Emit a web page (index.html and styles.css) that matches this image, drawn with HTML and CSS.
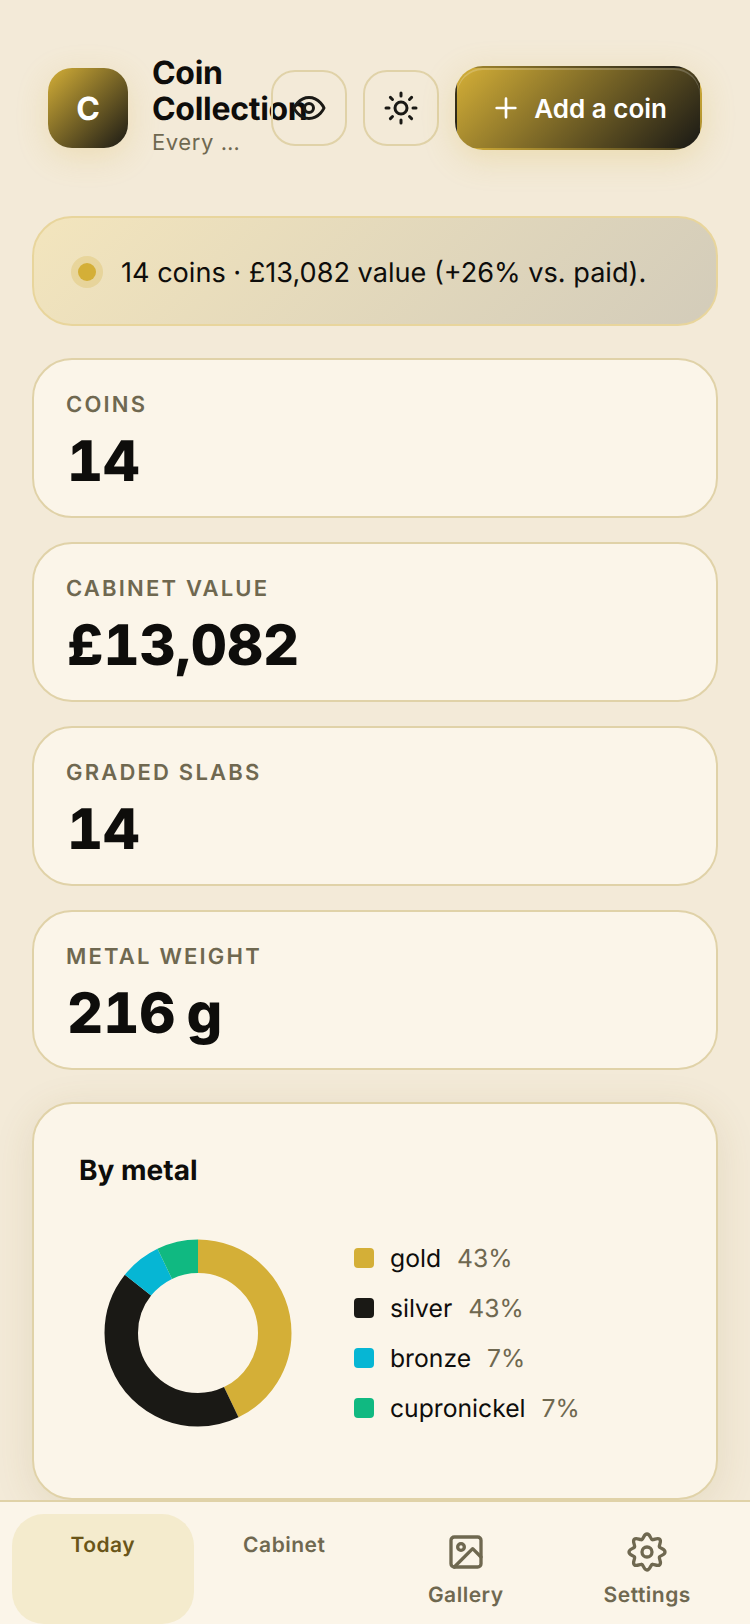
FILE: index.html
```html
<!DOCTYPE html>
<html lang="en">
<head>
<meta charset="utf-8">
<title>Coin Collection</title>
<link rel="stylesheet" href="styles.css">
</head>
<body>
<div class="app">
  <main class="content">
    <header class="topbar">
      <div class="logo">C</div>
      <div class="brand">
        <h1 class="brand-name">Coin Collection</h1>
        <p class="brand-tag">Every coin in the cabinet</p>
      </div>
      <div class="actions">
        <button class="icon-btn" aria-label="Toggle privacy">
          <svg class="icon" viewBox="0 0 24 24"><path d="M2 12s3-7 10-7 10 7 10 7-3 7-10 7-10-7-10-7z"/><circle cx="12" cy="12" r="3"/></svg>
        </button>
        <button class="icon-btn" aria-label="Toggle theme">
          <svg class="icon" viewBox="0 0 24 24"><circle cx="12" cy="12" r="4"/><path d="M12 2v2M12 20v2M4.930 4.930l1.410 1.410M17.660 17.660l1.410 1.410M2 12h2M20 12h2M6.340 17.660l-1.410 1.410M19.070 4.930l-1.410 1.410"/></svg>
        </button>
        <button class="add-btn">
          <svg class="icon add-icon" viewBox="0 0 24 24"><path d="M5 12h14M12 5v14"/></svg>
          <span>Add a coin</span>
        </button>
      </div>
    </header>

    <section class="banner">
      <span class="banner-dot"></span>
      <p class="banner-text">14 coins · £13,082 value (+26% vs. paid).</p>
    </section>

    <section class="stats">
      <article class="stat"><div class="stat-label">Coins</div><div class="stat-value">14</div></article>
      <article class="stat"><div class="stat-label">Cabinet value</div><div class="stat-value">£13,082</div></article>
      <article class="stat"><div class="stat-label">Graded slabs</div><div class="stat-value">14</div></article>
      <article class="stat"><div class="stat-label">Metal weight</div><div class="stat-value">216 g</div></article>
    </section>

    <section class="chart-card">
      <h2 class="chart-title">By metal</h2>
      <div class="chart-row">
        <svg class="donut" viewBox="0 0 240 240">
          <circle class="seg seg-gold" cx="120" cy="120" r="76.750" pathLength="14" stroke-dasharray="6 8" stroke-dashoffset="0"/>
          <circle class="seg seg-silver" cx="120" cy="120" r="76.750" pathLength="14" stroke-dasharray="6 8" stroke-dashoffset="-6"/>
          <circle class="seg seg-bronze" cx="120" cy="120" r="76.750" pathLength="14" stroke-dasharray="1 13" stroke-dashoffset="-12"/>
          <circle class="seg seg-cupro" cx="120" cy="120" r="76.750" pathLength="14" stroke-dasharray="1 13" stroke-dashoffset="-13"/>
        </svg>
        <ul class="legend">
          <li class="legend-row"><span class="swatch swatch-gold"></span><span class="legend-name">gold</span><span class="legend-pct">43%</span></li>
          <li class="legend-row"><span class="swatch swatch-silver"></span><span class="legend-name">silver</span><span class="legend-pct">43%</span></li>
          <li class="legend-row"><span class="swatch swatch-bronze"></span><span class="legend-name">bronze</span><span class="legend-pct">7%</span></li>
          <li class="legend-row"><span class="swatch swatch-cupro"></span><span class="legend-name">cupronickel</span><span class="legend-pct">7%</span></li>
        </ul>
      </div>
    </section>
  </main>

  <nav class="tabbar">
    <a class="tab tab-active">Today</a>
    <a class="tab">Cabinet</a>
    <a class="tab">
      <svg class="tab-icon" viewBox="0 0 24 24"><rect x="3" y="3" width="18" height="18" rx="2"/><circle cx="9" cy="9" r="2"/><path d="m21 15-5-5L5 21"/></svg>
      Gallery
    </a>
    <a class="tab">
      <!-- eight-lobed cog: one lobe, repeated around the centre -->
      <svg class="tab-icon cog" viewBox="-20 -20 40 40">
        <defs><path id="cog-lobe" d="M-5.170-12.470C-3.320-13.240-3.200-18 0-18S3.200-13.240 5.170-12.470"/></defs>
        <use href="#cog-lobe"/>
        <use href="#cog-lobe" transform="rotate(45)"/>
        <use href="#cog-lobe" transform="rotate(90)"/>
        <use href="#cog-lobe" transform="rotate(135)"/>
        <use href="#cog-lobe" transform="rotate(180)"/>
        <use href="#cog-lobe" transform="rotate(225)"/>
        <use href="#cog-lobe" transform="rotate(270)"/>
        <use href="#cog-lobe" transform="rotate(315)"/>
        <circle r="5"/>
      </svg>
      Settings
    </a>
  </nav>
</div>
</body>
</html>
```

FILE: styles.css
```css
* { box-sizing: border-box; }

html, body { margin: 0; padding: 0; }

body {
  background: #f3ead8;
  color: #0e0d0b;
  font-family: Inter, "Liberation Sans", sans-serif;
  text-rendering: geometricPrecision;
}

.app {
  display: flex;
  flex-direction: column;
  height: 1624px;
  overflow: hidden;
}

.content {
  flex: 1;
  min-height: 0;
  overflow: hidden;
  padding: 0 32px;
}

/* Top bar */
.topbar {
  display: flex;
  align-items: center;
  gap: 24px;
  height: 216px;
  padding: 0 16px;
}

.logo {
  flex: none;
  display: flex;
  align-items: center;
  justify-content: center;
  width: 80px;
  height: 80px;
  border-radius: 24px;
  background: linear-gradient(135deg, #d4af37, #1a1915);
  box-shadow: 0 8px 32px rgba(212, 175, 55, 0.22);
  color: #fff;
  font-size: 32px;
  font-weight: 700;
}

.brand {
  flex: 1;
  min-width: 0;
  padding-bottom: 3px;
}

.brand-name {
  margin: 0;
  font-size: 32px;
  line-height: 36px;
  font-weight: 700;
  letter-spacing: -0.3px;
}

.brand-tag {
  margin: 0;
  font-size: 22px;
  line-height: 32px;
  color: #6f6850;
  letter-spacing: 0.6px;
  white-space: nowrap;
  overflow: hidden;
  text-overflow: ellipsis;
}

.actions {
  flex: none;
  display: flex;
  align-items: center;
  gap: 16px;
}

.icon-btn {
  display: flex;
  align-items: center;
  justify-content: center;
  width: 76px;
  height: 76px;
  padding: 0;
  border: 2px solid #e0d2a8;
  border-radius: 24px;
  background: transparent;
  color: #1a1915;
}

.icon {
  width: 36px;
  height: 36px;
  fill: none;
  stroke: currentColor;
  stroke-width: 2;
  stroke-linecap: round;
  stroke-linejoin: round;
}

.add-btn {
  display: flex;
  align-items: center;
  gap: 12px;
  height: 84px;
  padding: 0 33px;
  border: 2px solid transparent;
  border-radius: 28px;
  background: linear-gradient(135deg, #d4af37, #1a1915);
  box-shadow: 0 8px 32px rgba(212, 175, 55, 0.25), inset 0 2px 0 rgba(255, 255, 255, 0.2);
  color: #fff;
  font-family: inherit;
  font-size: 26px;
  font-weight: 600;
}

.add-icon {
  width: 32px;
  height: 32px;
}

/* Summary banner */
.banner {
  display: flex;
  align-items: center;
  gap: 25px;
  height: 110px;
  padding: 2px 44px 0;
  border: 2px solid #e8d59c;
  border-radius: 40px;
  background: linear-gradient(135deg, #f3e5bd, #d3ccba);
}

.banner-dot {
  flex: none;
  width: 18px;
  height: 18px;
  border-radius: 50%;
  background: #d4af37;
  box-shadow: 0 0 0 7px rgba(212, 175, 55, 0.25);
}

.banner-text {
  margin: 0;
  font-size: 27.100px;
}

/* Stat cards */
.stats {
  display: flex;
  flex-direction: column;
  gap: 24px;
  margin-top: 32px;
}

.stat {
  height: 160px;
  padding: 31px 32px;
  border: 2px solid #e0d2a8;
  border-radius: 40px;
  background: #fbf5e9;
}

.stat-label {
  font-size: 22px;
  line-height: 28px;
  font-weight: 600;
  letter-spacing: 2.200px;
  text-transform: uppercase;
  color: #6f6850;
}

.stat-value {
  margin: 10px 0 0 1px;
  font-size: 56px;
  line-height: 64px;
  font-weight: 800;
  font-variant-numeric: tabular-nums;
  word-spacing: -4px;
}

/* Metal breakdown */
.chart-card {
  margin-top: 32px;
  height: 398px;
  padding: 48px 44px 44px;
  border: 2px solid #e0d2a8;
  border-radius: 40px;
  background: #fbf5e9;
  box-shadow: 0 8px 40px rgba(120, 95, 30, 0.12);
}

.chart-title {
  margin: 0 0 0 1px;
  font-size: 28px;
  line-height: 36px;
  font-weight: 700;
}

.chart-row {
  display: flex;
  align-items: center;
  gap: 36px;
  margin-top: 25px;
}

.donut {
  flex: none;
  width: 240px;
  height: 240px;
  transform: rotate(-90deg);
}

.seg {
  fill: none;
  stroke-width: 33.500;
}

.seg-gold { stroke: #d4af37; }
.seg-silver { stroke: #1a1915; }
.seg-bronze { stroke: #06b6d4; }
.seg-cupro { stroke: #10b981; }

.legend {
  display: flex;
  flex-direction: column;
  gap: 16px;
  margin: 0;
  padding: 0;
  list-style: none;
}

.legend-row {
  display: flex;
  align-items: center;
  font-size: 24.700px;
  line-height: 34px;
}

.swatch {
  flex: none;
  width: 20px;
  height: 20px;
  margin-right: 16px;
  border-radius: 4px;
}

.swatch-gold { background: #d4af37; }
.swatch-silver { background: #1a1915; }
.swatch-bronze { background: #06b6d4; }
.swatch-cupro { background: #10b981; }

.legend-pct {
  margin-left: 16px;
  color: #6f6850;
}

/* Bottom tabs */
.tabbar {
  flex: none;
  display: grid;
  grid-template-columns: repeat(4, 1fr);
  height: 124px;
  padding: 12px 12px 0;
  border-top: 2px solid #e0d2a8;
  background: #fbf5e9;
}

.tab {
  display: flex;
  flex-direction: column;
  align-items: center;
  gap: 10px;
  padding-top: 18px;
  border-radius: 32px;
  color: #6f6850;
  font-size: 21px;
  line-height: 28px;
  font-weight: 600;
  letter-spacing: 0.5px;
}

.tab-active {
  background: #f4ebcd;
  color: #6a5518;
}

.tab-icon {
  width: 40px;
  height: 40px;
  fill: none;
  stroke: currentColor;
  stroke-width: 2;
  stroke-linecap: round;
  stroke-linejoin: round;
}

.cog { stroke-width: 3.300; }
```
